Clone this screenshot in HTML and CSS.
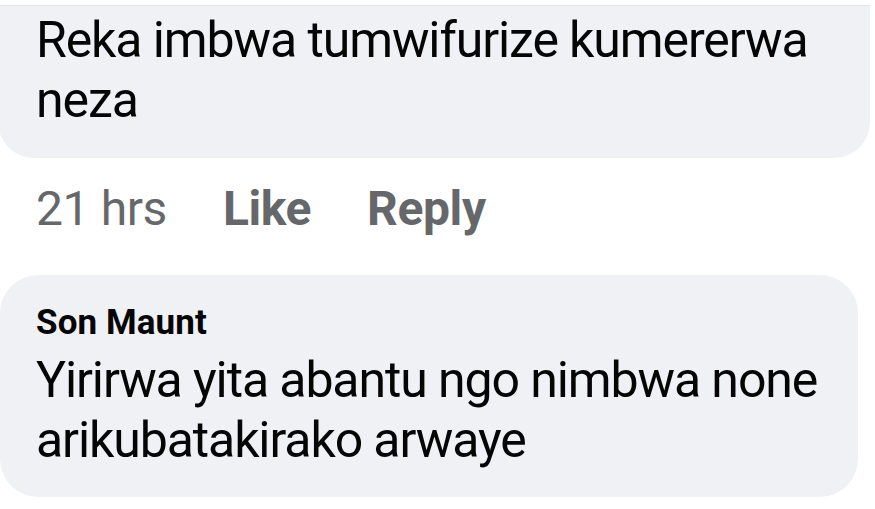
FILE: index.html
```html
<!DOCTYPE html>
<html>
<head>
<meta charset="utf-8">
<link rel="stylesheet" href="styles.css">
</head>
<body>
<div class="thread">
  <div class="bubble bubble-first">
    <p class="text">Reka imbwa tumwifurize kumererwa<br>neza</p>
  </div>
  <div class="meta">
    <span class="time">21 hrs</span>
    <span class="action">Like</span>
    <span class="action">Reply</span>
  </div>
  <div class="bubble bubble-second">
    <div class="name">Son Maunt</div>
    <p class="text">Yirirwa yita abantu ngo nimbwa none<br>arikubatakirako arwaye</p>
  </div>
</div>
</body>
</html>
```

FILE: styles.css
```css
html, body {
  margin: 0;
  padding: 0;
  background: #ffffff;
}
body {
  font-family: Roboto, "Noto Sans", Arial, sans-serif;
  color: #050505;
  width: 875px;
  height: 509px;
  overflow: hidden;
}
.thread {
  display: flex;
  flex-direction: column;
  align-items: flex-start;
  padding-top: 5px;
}
.bubble {
  background: #f0f1f5;
  box-sizing: border-box;
}
.bubble-first {
  width: 872px;
  margin-left: -2px;
  border-top: 1px solid #e4e5e9;
  border-radius: 0 0 36px 36px;
  padding: 4px 20px 26px 38px;
  height: 153px;
}
.text {
  margin: 0;
  font-size: 50px;
  line-height: 60px;
  letter-spacing: -1.1px;
  font-weight: 400;
  white-space: nowrap;
}
.meta {
  display: flex;
  gap: 56px;
  margin-top: 21px;
  padding-left: 36px;
  font-size: 48px;
  line-height: 60px;
  letter-spacing: -0.4px;
  color: #65676b;
}
.action {
  font-weight: 700;
}
.bubble-second {
  width: 858px;
  margin-top: 36px;
  border-radius: 38px;
  padding: 28px 20px 26px 36px;
  height: 222px;
}
.name {
  font-size: 35px;
  line-height: 40px;
  font-weight: 700;
  letter-spacing: 0.1px;
  margin-bottom: 7px;
}
```
